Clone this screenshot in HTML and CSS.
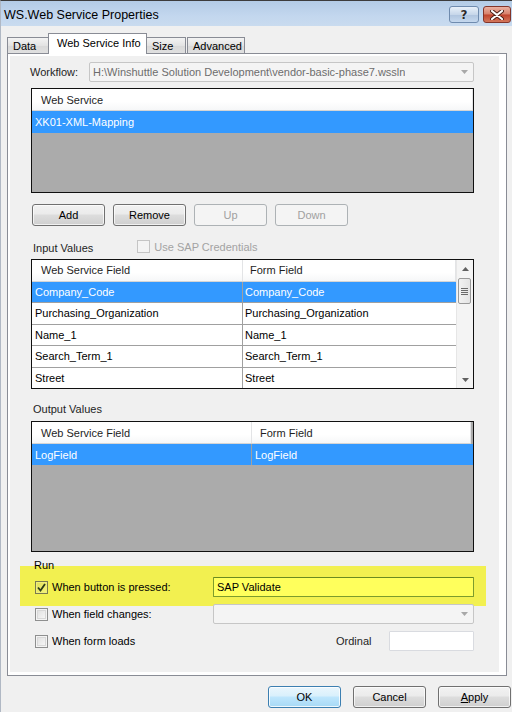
FILE: index.html
```html
<!DOCTYPE html>
<html>
<head>
<meta charset="utf-8">
<link rel="stylesheet" href="styles.css">
</head>
<body>
<div class="window">
  <div class="titlebar">
    <span class="title">WS.Web Service Properties</span>
    <div class="caption-btns">
      <div class="cbtn help">?</div>
      <div class="cbtn close">
        <svg width="14" height="10" viewBox="0 0 14 10"><path d="M2 1 L12 9 M12 1 L2 9" stroke="#4a1e16" stroke-width="4" stroke-linecap="round"/><path d="M2 1 L12 9 M12 1 L2 9" stroke="#ffffff" stroke-width="2.2" stroke-linecap="round"/></svg>
      </div>
    </div>
  </div>

  <div class="tabs">
    <div class="tab t-data">Data</div>
    <div class="tab active t-ws">Web Service Info</div>
    <div class="tab t-size">Size</div>
    <div class="tab t-adv">Advanced</div>
  </div>

  <div class="panel">
    <div class="page">
      <div class="workflow-row">
        <span class="wf-label">Workflow:</span>
        <div class="combo disabled wf-combo">
          <span class="combo-text">H:\Winshuttle Solution Development\vendor-basic-phase7.wssln</span>
          <span class="combo-arrow"><svg width="7" height="4" viewBox="0 0 7 4"><path d="M0 0 H7 L3.5 4 Z" fill="#a8a8a8"/></svg></span>
        </div>
      </div>

      <div class="grid ws-list">
        <div class="grid-head"><div class="hcell full">Web Service</div></div>
        <div class="grid-row sel"><div class="cell full">XK01-XML-Mapping</div></div>
      </div>

      <div class="btn-row">
        <div class="btn">Add</div>
        <div class="btn">Remove</div>
        <div class="btn disabled">Up</div>
        <div class="btn disabled">Down</div>
      </div>

      <div class="label-row">
        <span class="sec-label">Input Values</span>
        <span class="chk-wrap disabled sap-cred">
          <span class="chk dis"></span>
          <span class="chk-text">Use SAP Credentials</span>
        </span>
      </div>

      <div class="grid in-grid">
        <div class="grid-main">
          <div class="grid-head">
            <div class="hcell c1">Web Service Field</div>
            <div class="hcell c2">Form Field</div>
          </div>
          <div class="grid-row sel"><div class="cell c1">Company_Code</div><div class="cell c2">Company_Code</div></div>
          <div class="grid-row"><div class="cell c1">Purchasing_Organization</div><div class="cell c2">Purchasing_Organization</div></div>
          <div class="grid-row"><div class="cell c1">Name_1</div><div class="cell c2">Name_1</div></div>
          <div class="grid-row"><div class="cell c1">Search_Term_1</div><div class="cell c2">Search_Term_1</div></div>
          <div class="grid-row last"><div class="cell c1">Street</div><div class="cell c2">Street</div></div>
        </div>
        <div class="vscroll">
          <div class="sarrow"><svg width="7" height="4" viewBox="0 0 7 4"><path d="M0 4 H7 L3.5 0 Z" fill="#606060"/></svg></div>
          <div class="thumb"><span></span><span></span><span></span><span></span></div>
          <div class="strack"></div>
          <div class="sarrow"><svg width="7" height="4" viewBox="0 0 7 4"><path d="M0 0 H7 L3.5 4 Z" fill="#606060"/></svg></div>
        </div>
      </div>

      <div class="label-row out-label">
        <span class="sec-label">Output Values</span>
      </div>

      <div class="grid out-grid">
        <div class="grid-head">
          <div class="hcell o1">Web Service Field</div>
          <div class="hcell o2">Form Field</div>
        </div>
        <div class="grid-row sel"><div class="cell o1">LogField</div><div class="cell o2">LogField</div></div>
      </div>

      <div class="run-area">
        <div class="run-label">Run</div>
        <div class="highlight">
          <div class="run-row r1">
            <span class="chk-wrap">
              <span class="chk checked"><svg width="11" height="11" viewBox="0 0 11 11"><path d="M2 5.5 L4.5 8.5 L9 2" fill="none" stroke="#2b3a1a" stroke-width="1.8"/></svg></span>
              <span class="chk-text">When button is pressed:</span>
            </span>
            <div class="textbox yellow">SAP Validate</div>
          </div>
        </div>
        <div class="run-row r2">
          <span class="chk-wrap">
            <span class="chk"></span>
            <span class="chk-text">When field changes:</span>
          </span>
          <div class="combo disabled run-combo">
            <span class="combo-text"></span>
            <span class="combo-arrow"><svg width="7" height="4" viewBox="0 0 7 4"><path d="M0 0 H7 L3.5 4 Z" fill="#a8a8a8"/></svg></span>
          </div>
        </div>
        <div class="run-row r3">
          <span class="chk-wrap">
            <span class="chk"></span>
            <span class="chk-text">When form loads</span>
          </span>
          <span class="ord-label">Ordinal</span>
          <div class="textbox ordinal"></div>
        </div>
      </div>
    </div>
  </div>

  <div class="footer">
    <div class="btn dlg default">OK</div>
    <div class="btn dlg">Cancel</div>
    <div class="btn dlg"><span class="ul">A</span>pply</div>
  </div>
</div>
</body>
</html>
```

FILE: styles.css
```css
* { box-sizing: border-box; }
html, body { margin: 0; padding: 0; }
body {
  width: 512px;
  height: 712px;
  overflow: hidden;
  background: #f0f0f0;
  font-family: "Liberation Sans", Arial, sans-serif;
  font-size: 11px;
  color: #000;
}
.window {
  width: 512px;
  height: 712px;
  background: #f0f0f0;
  border-top: 1px solid #3c3c3c;
  border-left: 1px solid #b0b8c4;
}

/* title bar */
.titlebar {
  height: 25px;
  display: flex;
  align-items: center;
  justify-content: space-between;
  background: linear-gradient(#b3cbe6, #c3d7ee 60%, #c9dbef);
  padding-left: 3px;
}
.title {
  font-size: 12.5px;
  color: #000;
  margin-top: 3px;
}
.caption-btns {
  display: flex;
  align-self: flex-start;
  margin-top: 5px;
  gap: 4px;
  margin-right: 1px;
}
.cbtn {
  height: 17px;
  border-radius: 3px;
  display: flex;
  align-items: center;
  justify-content: center;
}
.help {
  width: 30px;
  border: 1px solid #6f8bae;
  background: linear-gradient(#e8f0f9, #c7d7ea 50%, #afc4de 51%, #c5d8ee);
  color: #2b2b2b;
  font-family: "DejaVu Sans", sans-serif;
  font-weight: bold;
  font-size: 12px;
  text-shadow: 0 0 1px #fff;
}
.close {
  width: 28px;
  border: 1px solid #83352a;
  background: linear-gradient(#eab0a1, #d7806b 48%, #c0432c 52%, #d2775c);
}

/* tabs */
.tabs {
  height: 27px;
  display: flex;
  align-items: flex-end;
  padding-left: 6px;
}
.tab {
  height: 16px;
  border: 1px solid #898c95;
  border-bottom: none;
  background: linear-gradient(#f3f3f3, #e3e3e3 50%, #d8d8d8 51%, #e0e0e0);
  display: flex;
  align-items: center;
  padding-left: 5px;
  font-size: 11px;
}
.t-data { width: 42px; }
.tab.active {
  height: 21px;
  background: #fff;
  position: relative;
  z-index: 2;
  margin-bottom: -1px;
  margin-left: -1px;
  padding-left: 8px;
  padding-bottom: 2px;
  width: 99px;
}
.t-size { width: 40px; margin-left: -1px; }
.t-adv { width: 58px; margin-left: 1px; }

/* panel */
.panel {
  margin-left: 6px;
  width: 500px;
  height: 623px;
  border: 1px solid #898c95;
  background: #fff;
  padding: 2px 7px 3px 2px;
}
.page {
  width: 100%;
  height: 100%;
  background: #f0f0f0;
  display: flex;
  flex-direction: column;
}

/* workflow */
.workflow-row {
  display: flex;
  align-items: center;
  margin-top: 6px;
  padding-left: 20px;
  height: 20px;
}
.wf-label { width: 59px; color: #1e1e1e; }
.combo {
  height: 20px;
  border: 1px solid #c6c6c6;
  border-radius: 2px;
  background: #f4f4f4;
  display: flex;
  align-items: center;
  justify-content: space-between;
  padding-left: 3px;
}
.wf-combo { width: 385px; }
.combo-text { color: #6d6d6d; white-space: nowrap; overflow: hidden; }
.combo-arrow {
  width: 17px;
  height: 18px;
  display: flex;
  align-items: center;
  justify-content: center;
}

/* grids */
.grid {
  margin-left: 21px;
  width: 443px;
  border: 1px solid #101010;
  background: #ababab;
}
.ws-list { margin-top: 6px; height: 105px; }
.grid-head {
  height: 22px;
  display: flex;
  background: linear-gradient(#ffffff, #ffffff 60%, #f6f7f8);
  border-bottom: 1px solid #d5d5d5;
}
.hcell {
  display: flex;
  align-items: center;
  padding-left: 9px;
  color: #1e1e1e;
  border-right: 1px solid #e3e4e6;
  height: 100%;
}
.hcell.full { width: 100%; border-right: 1px solid #e3e4e6; }
.grid-row {
  height: 22px;
  display: flex;
  background: #fff;
  border-bottom: 1px solid #a0a0a0;
}
.grid-row.sel { background: #3399ff; color: #fff; }
.grid-row.last { border-bottom: none; height: 21px; }
.cell {
  display: flex;
  align-items: center;
  padding-left: 3px;
  height: 100%;
  white-space: nowrap;
  overflow: hidden;
}
.cell.full { width: 100%; }
.ws-list .grid-row.sel { border-bottom: none; height: 22px; }

.btn-row {
  display: flex;
  gap: 8px;
  margin-top: 11px;
  margin-left: 22px;
}
.btn {
  width: 73px;
  height: 22px;
  border: 1px solid #707070;
  border-radius: 3px;
  background: linear-gradient(#f2f2f2, #ebebeb 45%, #dddddd 50%, #cfcfcf);
  display: flex;
  align-items: center;
  justify-content: center;
  box-shadow: inset 0 0 0 1px rgba(255,255,255,0.7);
}
.btn.disabled {
  border-color: #adb2b5;
  background: #f4f4f4;
  color: #a0a0a0;
  box-shadow: none;
}

.label-row {
  display: flex;
  align-items: center;
  height: 15px;
  margin-top: 14px;
  margin-left: 23px;
}
.sec-label { color: #1e1e1e; }
.chk-wrap { display: inline-flex; align-items: center; }
.sap-cred { margin-left: 44px; margin-top: -2px; }
.chk {
  width: 13px;
  height: 13px;
  border: 1px solid #8e8f8f;
  background: linear-gradient(135deg, #dcdcdc, #fbfbfb);
  box-shadow: inset 0 0 0 1px #f4f4f4, inset 0 0 0 2px #d8d8d8;
  display: inline-flex;
  align-items: center;
  justify-content: center;
}
.chk.dis { border-color: #c5c5c5; background: #f4f4f4; box-shadow: none; }
.chk.checked { background: linear-gradient(135deg, #e0df58, #f6f47a); box-shadow: inset 0 0 0 1px #efee7a; border-color: #7a7a50; }
.chk-text { margin-left: 4px; }
.disabled .chk-text { color: #a3a3a3; }

.in-grid {
  margin-top: 4px;
  height: 130px;
  display: flex;
  background: #fff;
}
.grid-main { flex: 1; display: flex; flex-direction: column; }
.in-grid .c1 { width: 211px; border-right: 1px solid #a0a0a0; }
.in-grid .c2 { flex: 1; }
.in-grid .hcell.c1 { border-right: 1px solid #e3e4e6; }
.in-grid .hcell.c2 { padding-left: 7px; }
.in-grid .cell.c2 { padding-left: 2px; }
.in-grid .grid-head { height: 22px; }

.vscroll {
  width: 17px;
  display: flex;
  flex-direction: column;
  background: #f4f4f4;
  border-left: 1px solid #e6e6e6;
}
.sarrow {
  height: 17px;
  display: flex;
  align-items: center;
  justify-content: center;
}
.thumb {
  margin: 1px 2px 0 1px;
  height: 26px;
  border: 1px solid #9a9a9a;
  border-radius: 2px;
  background: linear-gradient(90deg, #f2f2f2, #e4e4e4);
  display: flex;
  flex-direction: column;
  align-items: center;
  justify-content: center;
  gap: 1px;
}
.thumb span { width: 7px; height: 1px; background: #6a6a6a; }
.strack { flex: 1; }

.out-label { margin-top: 12px; }
.out-grid { margin-top: 5px; height: 131px; }
.out-grid .o1 { width: 220px; border-right: 1px solid #a0a0a0; }
.out-grid .hcell.o1 { border-right: 1px solid #e3e4e6; }
.out-grid .o2 { flex: 1; }
.out-grid .hcell.o2 { padding-left: 8px; }
.out-grid .cell.o2 { padding-left: 3px; }
.out-grid .grid-row.sel { border-bottom: none; height: 21px; }
.out-grid .grid-head { margin-right: 2px; }

/* run */
.run-area { display: flex; flex-direction: column; position: relative; }
.run-label {
  margin-left: 24px;
  margin-top: 8px;
  height: 11px;
  line-height: 11px;
  position: relative;
  z-index: 1;
}
.highlight {
  margin-left: 10px;
  width: 466px;
  height: 40px;
  background: #f2f050;
  margin-top: -5px;
  padding-top: 11px;
}
.run-row {
  display: flex;
  align-items: center;
  height: 20px;
  padding-left: 25px;
}
.highlight .run-row { padding-left: 15px; }
.r1 .chk-wrap { width: 178px; }
.r2 { margin-top: -2px; }
.r2 .chk-wrap { width: 178px; }
.r3 { margin-top: 7px; }
.r3 .chk-wrap { width: 301px; }
.textbox {
  height: 20px;
  border: 1px solid #abadb3;
  background: #fff;
  display: flex;
  align-items: center;
  padding-left: 3px;
  border-radius: 1px;
}
.textbox.yellow {
  width: 261px;
  background: #ffff5c;
  border-color: #7c9c2c;
  border-top-color: #6a8a20;
}
.run-combo { width: 261px; background: #f4f4f4; border-color: #c6c6c6; }
.ord-label { width: 53px; color: #1e1e1e; }
.textbox.ordinal { width: 85px; border-color: #d9dbe0; }

/* footer */
.footer {
  display: flex;
  gap: 12px;
  margin-top: 10px;
  margin-left: 267px;
}
.btn.dlg { width: 73px; }
.btn.default {
  border-color: #3c7fb1;
  background: linear-gradient(#eaf6fd, #d9f0fc 45%, #bee6fd 50%, #a7d9f5);
  box-shadow: inset 0 0 0 1px rgba(255,255,255,0.8);
}
.ul { text-decoration: underline; }
```
